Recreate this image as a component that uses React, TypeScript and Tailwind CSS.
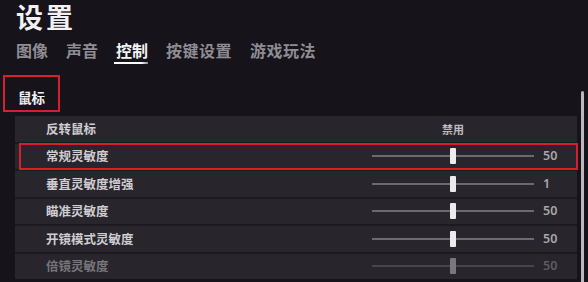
import React from 'react';

type Row = {
  label: string;
  value?: number;
  text?: string;
  pos?: number;
  highlight?: boolean;
  dim?: boolean;
};

const rows: Row[] = [
  { label: '反转鼠标', text: '禁用' },
  { label: '常规灵敏度', value: 50, pos: 0.5, highlight: true },
  { label: '垂直灵敏度增强', value: 1, pos: 0.5 },
  { label: '瞄准灵敏度', value: 50, pos: 0.5 },
  { label: '开镜模式灵敏度', value: 50, pos: 0.5 },
  { label: '倍镜灵敏度', value: 50, pos: 0.5, dim: true },
];

const tabs = ['图像', '声音', '控制', '按键设置', '游戏玩法'];

function SettingRow({ row }: { row: Row }) {
  return (
    <div className="relative flex h-[25.5px] items-center bg-[#28262c] pl-[31px]">
      <span
        className={`flex-1 text-[12.5px] font-bold leading-none ${
          row.dim ? 'text-[#77757b]' : 'text-[#cfcdd2]'
        }`}
      >
        {row.label}
      </span>
      <div className="relative flex h-full w-[162px] items-center justify-center">
        {row.text ? (
          <span className="text-[11px] font-bold text-[#bdbbc0]">{row.text}</span>
        ) : (
          <>
            <div className={`h-[2px] w-full ${row.dim ? 'bg-[#48464c]' : 'bg-[#6c6a70]'}`} />
            <div
              className={`absolute top-1/2 h-[16px] w-[6px] -translate-x-1/2 -translate-y-1/2 rounded-[1px] ${
                row.dim ? 'bg-[#7a787d]' : 'bg-[#ebebeb]'
              }`}
              style={{ left: `${(row.pos ?? 0) * 100}%` }}
            />
          </>
        )}
      </div>
      <span
        className={`ml-[9px] w-[34px] text-[12.5px] font-semibold leading-none ${
          row.dim ? 'text-[#5e5c62]' : 'text-[#a9a7ac]'
        }`}
        style={{ fontFamily: '"Noto Sans", sans-serif' }}
      >
        {row.value ?? ''}
      </span>
      {row.highlight && (
        <div className="pointer-events-none absolute -top-[1px] -bottom-[1px] left-[4px] -right-[1px] border-2 border-[#d4202c]" />
      )}
    </div>
  );
}

export default function App() {
  return (
    <div
      className="h-[282px] w-[588px] overflow-hidden bg-[#16131a] text-white"
      style={{ fontFamily: '"Noto Sans CJK SC", "Noto Sans", sans-serif' }}
    >
      {/* Title */}
      <div className="pl-[16px] pt-[1px] text-[27px] font-bold leading-[32px] tracking-[3px] text-[#f2f2f4]">
        设置
      </div>

      {/* Tabs */}
      <div className="mt-[7px] flex gap-[18px] pl-[16px]">
        {tabs.map((t) => (
          <div key={t} className="flex flex-col">
            <span
              className={`text-[16px] font-bold leading-[20px] ${t.length > 2 ? 'tracking-[0.5px]' : ''} ${
                t === '控制' ? 'text-[#f4f4f6]' : 'text-[#8f8d93]'
              }`}
            >
              {t}
            </span>
            {t === '控制' && (
              <div className="mt-[2px] -ml-[2px] h-[2px] w-[34px] bg-gradient-to-r from-white from-80% to-[#8a888e]" />
            )}
          </div>
        ))}
      </div>

      {/* Content */}
      <div className="flex">
        <div className="flex flex-col">
          <div className="ml-[3px] mt-[11px] flex h-[37px] w-[57px] items-start border-2 border-[#d4202c] pl-[13px] pt-[13px]">
            <span className="text-[13.5px] font-bold leading-[14px] text-[#f2f2f4]">鼠标</span>
          </div>
          <div className="ml-[15px] mt-[4px] flex w-[562px] flex-col gap-[2px] bg-[#1c1a20]">
            {rows.map((r) => (
              <SettingRow key={r.label} row={r} />
            ))}
          </div>
        </div>
        <div className="ml-[4px] mt-[27px] h-[220px] w-[3px] rounded-full bg-[#b9b8bc]" />
      </div>
    </div>
  );
}
